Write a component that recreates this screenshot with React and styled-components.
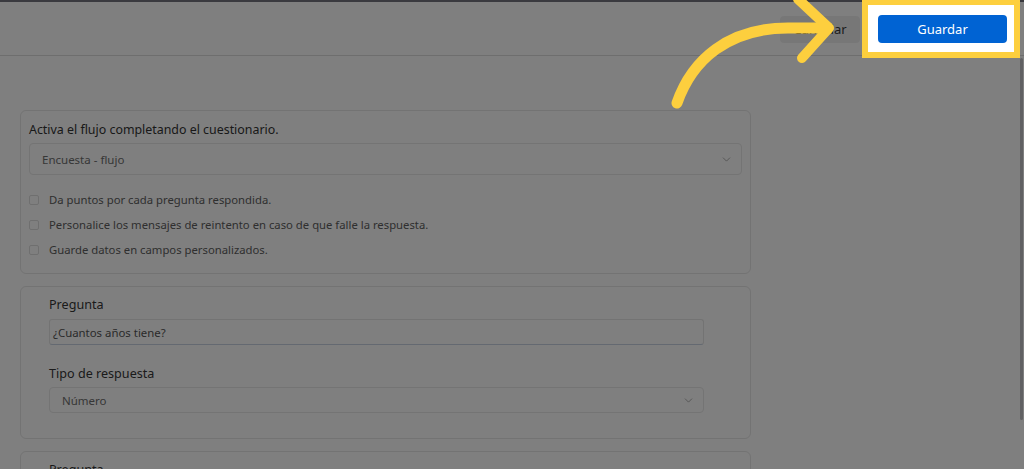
import React from "react";
import styled, { createGlobalStyle } from "styled-components";
import { ChevronDown } from "lucide-react";

const Global = createGlobalStyle`
  html, body { margin: 0; padding: 0; background: #ffffff; overflow: hidden; height: 100%; }
  body { font-family: "Noto Sans", "Open Sans", sans-serif; color: #404040; }
  * { box-sizing: border-box; }
`;

const Page = styled.div`
  position: relative;
  width: 1024px;
  height: 469px;
  overflow: hidden;
  background: #ffffff;
`;

const TopStrip = styled.div`
  height: 2px;
  background: #75757e;
`;

const Header = styled.header`
  height: 54px;
  border-bottom: 1px solid #dcdcdc;
  display: flex;
  align-items: center;
  justify-content: flex-end;
  gap: 18px;
  padding-right: 17px;
`;

const Button = styled.button`
  height: ${(p) => (p.$primary ? 28 : 27)}px;
  width: ${(p) => (p.$primary ? 129 : 80)}px;
  border: none;
  border-radius: 4px;
  font-family: inherit;
  font-size: 13px;
  font-weight: 400;
  background: ${(p) => (p.$primary ? "#0063d3" : "#efefef")};
  color: ${(p) => (p.$primary ? "#ffffff" : "#3a3a3a")};
  padding: 0;
  margin-top: 1px;
  text-align: center;
`;

const Main = styled.main`
  padding: 54px 0 0 20px;
  display: flex;
  flex-direction: column;
  gap: 12px;
`;

const Card = styled.section`
  width: 731px;
  border: 1px solid #e6e6e6;
  border-radius: 6px;
  background: #ffffff;
  padding: ${(p) => p.$pad};
  display: flex;
  flex-direction: column;
`;

const Title = styled.div`
  font-size: 12.4px;
  line-height: 18px;
  color: #333333;
`;

const Label = styled.div`
  font-size: 12.6px;
  line-height: 18px;
  color: #363636;
  margin-top: ${(p) => p.$mt || 0}px;
`;

const SelectBox = styled.div`
  height: ${(p) => p.$h}px;
  margin-top: ${(p) => p.$mt}px;
  border: 1px solid #e8e8e8;
  border-radius: 4px;
  display: flex;
  align-items: center;
  justify-content: space-between;
  padding: 0 ${(p) => p.$pr}px 0 ${(p) => p.$pl}px;
  font-size: 11.5px;
  color: #6e6e6e;
`;

const TextInput = styled.div`
  height: 26px;
  margin-top: 5px;
  border: 1px solid #e6e6e6;
  border-bottom-color: #c9d3e2;
  border-radius: 3px;
  display: flex;
  align-items: center;
  padding-left: 3px;
  font-size: 11.4px;
  color: #555555;
`;

const CheckList = styled.div`
  margin-top: 12px;
  display: flex;
  flex-direction: column;
`;

const CheckRow = styled.label`
  height: 25px;
  display: flex;
  align-items: center;
  gap: 10px;
  font-size: 11.3px;
  color: #5e5e5e;
`;

const Box = styled.span`
  width: 10px;
  height: 10px;
  border: 1px solid #dedede;
  border-radius: 2px;
  flex: none;
`;

const Spotlight = styled.div`
  position: absolute;
  left: 862px;
  top: -1px;
  width: 158px;
  height: 59px;
  border: 6px solid #fdcf3e;
  box-shadow: 0 0 0 3000px rgba(0, 0, 0, 0.5);
  z-index: 5;
  pointer-events: none;
`;

const Scrollbar = styled.div`
  position: absolute;
  right: 1px;
  top: 58px;
  width: 3px;
  height: 362px;
  border-radius: 2px;
  background: #c2c2c6;
`;

const Arrow = styled.svg`
  position: absolute;
  left: 660px;
  top: 0;
  z-index: 6;
`;

export default function App() {
  return (
    <Page>
      <Global />
      <TopStrip />
      <Header>
        <Button>Cancelar</Button>
        <Button $primary>Guardar</Button>
      </Header>
      <Main>
        <Card $pad="10px 8px 11px 8px">
          <Title>Activa el flujo completando el cuestionario.</Title>
          <SelectBox $h={32} $mt={4} $pl={12} $pr={8}>
            <span>Encuesta - flujo</span>
            <ChevronDown size={13} strokeWidth={1.3} color="#8a8a8a" />
          </SelectBox>
          <CheckList>
            <CheckRow><Box />Da puntos por cada pregunta respondida.</CheckRow>
            <CheckRow><Box />Personalice los mensajes de reintento en caso de que falle la respuesta.</CheckRow>
            <CheckRow><Box />Guarde datos en campos personalizados.</CheckRow>
          </CheckList>
        </Card>
        <Card $pad="9px 46px 25px 28px">
          <Label>Pregunta</Label>
          <TextInput>¿Cuantos años tiene?</TextInput>
          <Label $mt={20}>Tipo de respuesta</Label>
          <SelectBox $h={26} $mt={4} $pl={12} $pr={8}>
            <span>Número</span>
            <ChevronDown size={13} strokeWidth={1.3} color="#8a8a8a" />
          </SelectBox>
        </Card>
        <Card $pad="9px 46px 25px 28px">
          <Label>Pregunta</Label>
          <TextInput>¿Cuantos años tiene?</TextInput>
        </Card>
      </Main>
      <Scrollbar />
      <Spotlight />
      <Arrow width="200" height="120" viewBox="0 0 200 120">
        <path
          d="M17 103 C 32 60, 68 28, 128 28 L 168 28"
          fill="none"
          stroke="#fdcf3e"
          strokeWidth="11"
          strokeLinecap="round"
        />
        <path
          d="M138 -1 L 169 28 L 142 58"
          fill="none"
          stroke="#fdcf3e"
          strokeWidth="10"
          strokeLinecap="round"
          strokeLinejoin="round"
        />
      </Arrow>
    </Page>
  );
}
